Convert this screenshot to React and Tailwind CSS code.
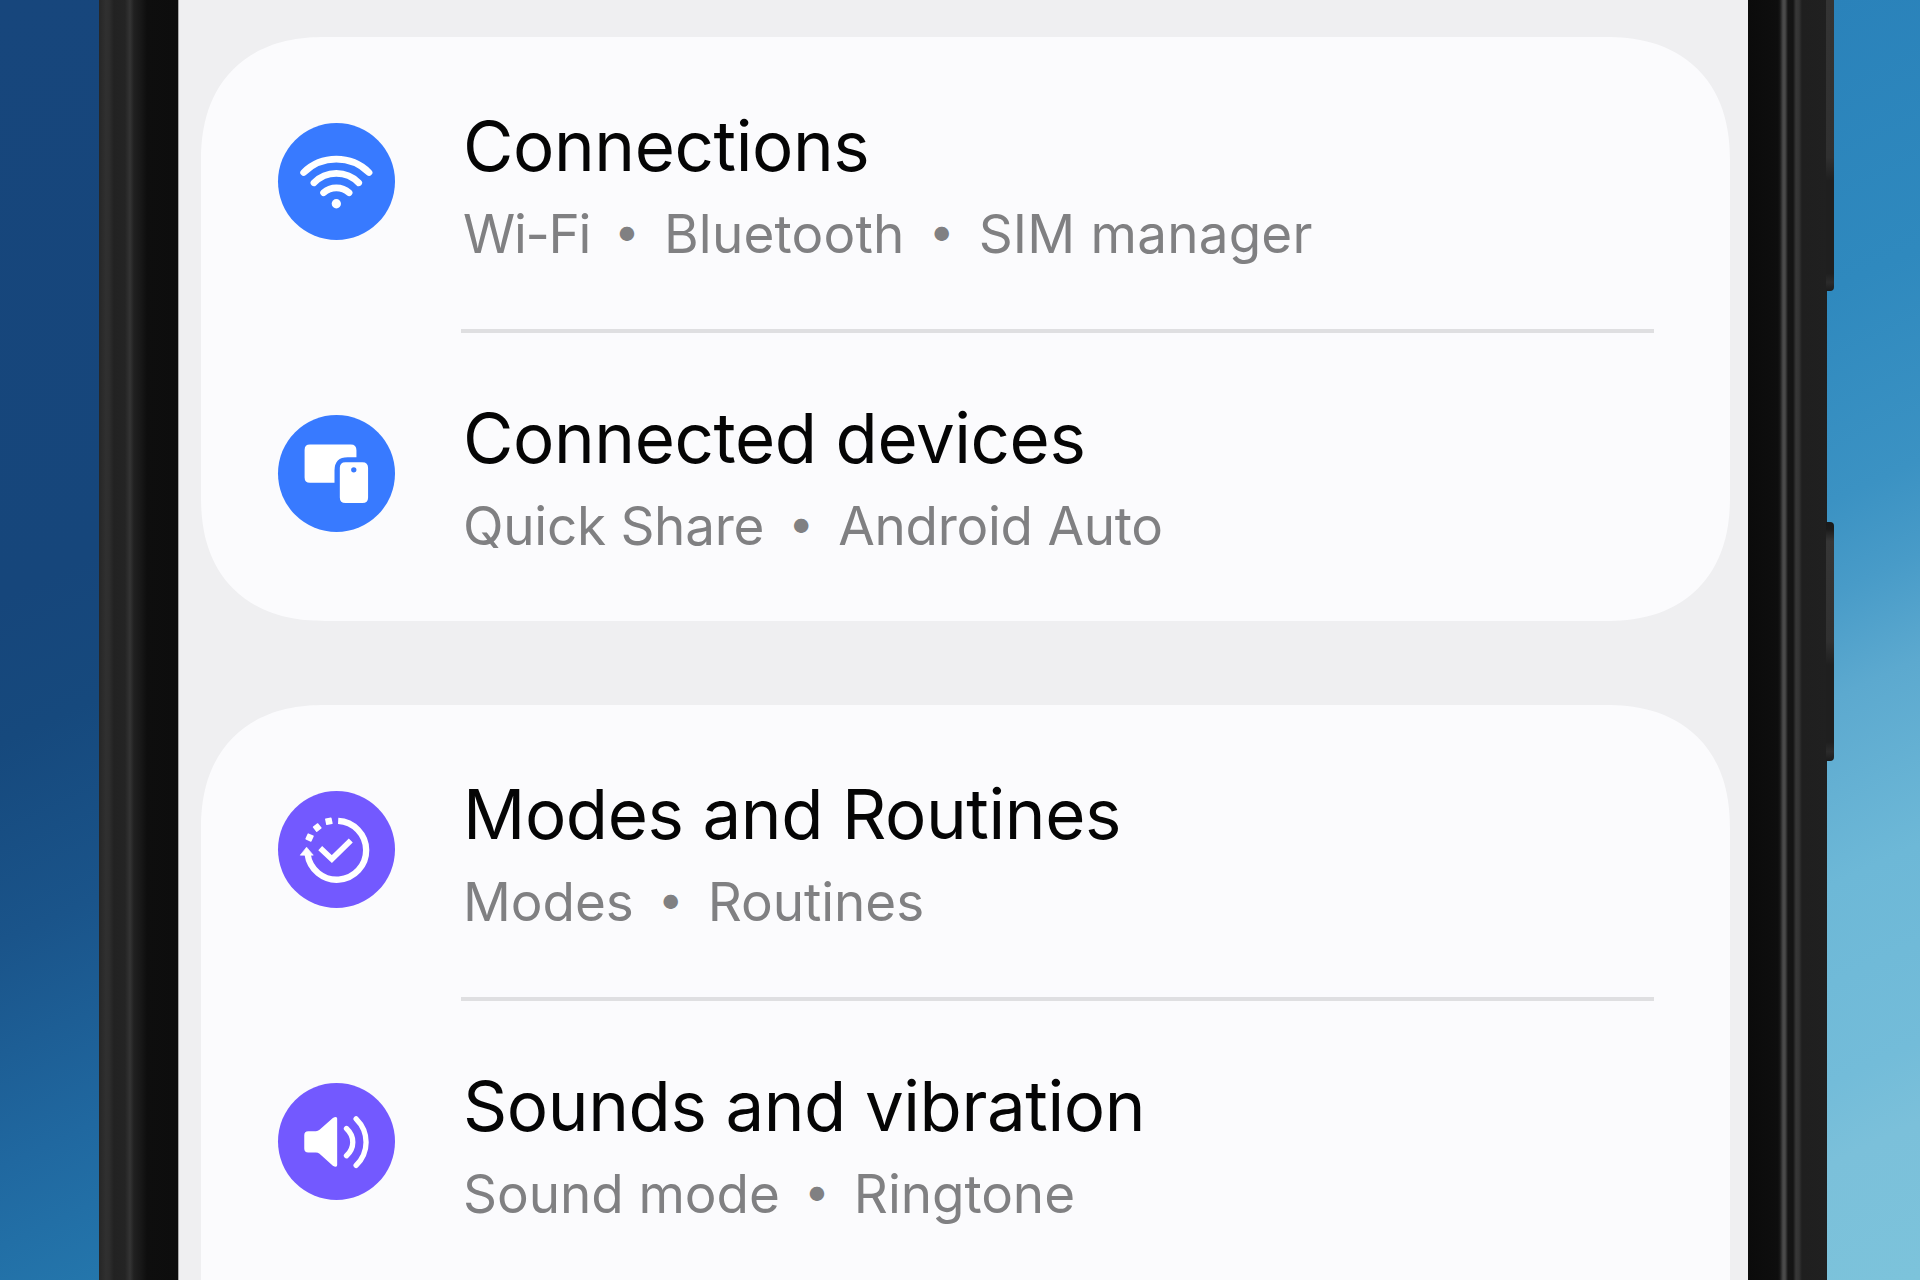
import { Fragment } from 'react';

const WifiIcon = () => (
  <svg viewBox="54 69 352 352" className="w-full h-full" fill="none" stroke="white" strokeWidth="20" strokeLinecap="round">
    <path d="M131 218A141 141 0 0 1 328 218" />
    <path d="M162 249A94 94 0 0 1 297 249" />
    <path d="M191 279A57 57 0 0 1 268 279" />
    <circle cx="229.500" cy="312" r="14" fill="white" stroke="none" />
  </svg>
);

const DevicesIcon = () => (
  <svg viewBox="54 61 352 352" className="w-full h-full" fill="white">
    <path d="M150 150H273Q290 150 290 167V188H264Q224 188 224 228V265H150Q134 265 134 249V166Q134 150 150 150Z" />
    <path
      fillRule="evenodd"
      d="M257 203H308Q325 203 325 220V309Q325 326 308 326H257Q240 326 240 309V220Q240 203 257 203ZM282 218a8 8 0 1 0 0 16a8 8 0 1 0 0 -16Z"
    />
  </svg>
);

const ModesIcon = () => (
  <svg viewBox="54 64 352 352" className="w-full h-full" fill="none" stroke="white" strokeWidth="19">
    <path d="M235 154A88.500 88.500 0 1 1 143 254" />
    <path d="M181 236L216 269L273 213" strokeWidth="17" />
    <path d="M140 233L160 257H121Z" fill="white" stroke="white" strokeWidth="2" />
    <g fill="white" stroke="none">
      <rect x="197" y="145" width="20" height="20" rx="2" transform="rotate(-12 207 155)" />
      <rect x="162" y="164" width="20" height="20" rx="2" transform="rotate(-38 172 174)" />
      <rect x="139" y="194" width="20" height="20" rx="2" transform="rotate(-66 149 204)" />
    </g>
  </svg>
);

const SoundIcon = () => (
  <svg viewBox="54 71 352 352" className="w-full h-full" fill="none" stroke="white" strokeWidth="16" strokeLinecap="round">
    <path
      d="M145 216H168Q174 216 179 212L219 176Q224 173 228 173Q232 173 232 178V318Q232 323 228 323Q224 323 219 320L179 284Q174 280 168 280H145Q133 280 133 268V228Q133 216 145 216Z"
      fill="white"
      stroke="none"
    />
    <path d="M260 208Q279 226 279 249Q279 272 260 290" />
    <path d="M289 179Q319 209 319 249Q319 289 289 319" />
  </svg>
);

const groups = [
  [
    { title: 'Connections', items: ['Wi-Fi', 'Bluetooth', 'SIM manager'], icon: WifiIcon, color: 'bg-[#387aff]', tracking: 'tracking-[0.004em]' },
    { title: 'Connected devices', items: ['Quick Share', 'Android Auto'], icon: DevicesIcon, color: 'bg-[#387aff]', tracking: 'tracking-[-0.005em]' },
  ],
  [
    { title: 'Modes and Routines', items: ['Modes', 'Routines'], icon: ModesIcon, color: 'bg-[#7359ff]', tracking: 'tracking-[-0.001em]' },
    { title: 'Sounds and vibration', items: ['Sound mode', 'Ringtone'], icon: SoundIcon, color: 'bg-[#7359ff]', tracking: 'tracking-[-0.001em]' },
  ],
];

function SettingRow({ title, items, icon: Icon, color, tracking, first }) {
  return (
    <div className="flex h-[292px] pl-[77px]">
      <div className={`mt-[86px] size-[117px] shrink-0 rounded-full ${color}`}>
        <Icon />
      </div>
      <div className={`ml-[66px] mr-[76px] flex-1 ${first ? '' : 'border-t-4 border-[#dfdfe1]'}`}>
        <div className={`pl-[2px] ${first ? 'pt-[69px]' : 'pt-[65px]'}`}>
          <h2 className="whitespace-nowrap text-[69px] leading-[80px] tracking-[-0.006em] text-[#050505]">{title}</h2>
          <p className="mt-4 flex whitespace-nowrap text-[53px] leading-[64px] text-[#808082]">
            {items.map((item, i) => (
              <Fragment key={item}>
                {i > 0 && <span className="w-[74px] text-center text-[46px] leading-[57px]">•</span>}
                <span className={item === 'Wi-Fi' ? 'tracking-[-0.025em]' : tracking}>{item}</span>
              </Fragment>
            ))}
          </p>
        </div>
      </div>
    </div>
  );
}

function SettingCard({ rows }) {
  return (
    <section className="shrink-0 rounded-[124px] bg-[#fbfbfd] [corner-shape:superellipse(1.2)] last:rounded-b-none last:pb-10">
      {rows.map((row, i) => (
        <SettingRow key={row.title} {...row} first={i === 0} />
      ))}
    </section>
  );
}

export default function App() {
  return (
    <div className="flex h-[1280px] w-[1920px] overflow-hidden font-['Inter',sans-serif]">
      {/* Wallpaper and left edge of the phone */}
      <div className="w-[99px] bg-[linear-gradient(155deg,#17467c_0%,#16467b_45%,#16497d_56%,#1a548a_71%,#2068a0_88%,#2476ac_100%)]" />
      <div className="w-[79px] bg-[linear-gradient(90deg,#262626_0px,#303030_7px,#2e2e2e_10px,#222_15px,#242424_26px,#343434_31px,#202020_35px,#191919_41px,#0e0e0e_48px,#0d0d0d_100%)]" />

      {/* Screen */}
      <main className="flex w-[1570px] flex-col gap-[84px] border-l border-[#aaaaaa] bg-[#efeff1] pl-[22px] pr-[18px] pt-[37px]">
        {groups.map((rows) => (
          <SettingCard key={rows[0].title} rows={rows} />
        ))}
      </main>

      {/* Right edge with the side buttons */}
      <div className="relative z-10 w-[79px] bg-[linear-gradient(90deg,#0b0b0b_0px,#0e0e0e_30px,#181818_32px,#4a4a4a_35px,#4a4a4a_37px,#151515_40px,#141414_45px,#383838_48px,#343434_51px,#1f1f1f_54px,#202020_100%)]">
        <div className="absolute left-[78px] top-0 h-[291px] w-[8px] rounded-br-[4px] bg-[linear-gradient(180deg,#343434_0%,#303030_54%,#1f1f1f_62%,#1f1f1f_94%,#2b2b2b_97%,#1c1c1c_100%)]" />
        <div className="absolute left-[78px] top-[522px] h-[239px] w-[8px] rounded-r-[4px] bg-[linear-gradient(180deg,#1a1a1a_0%,#1c1c1c_3%,#363636_8%,#303030_50%,#1f1f1f_60%,#1f1f1f_92%,#2b2b2b_96%,#1c1c1c_100%)]" />
      </div>
      <div className="flex-1 bg-[linear-gradient(155deg,#2a82ba_0%,#2f89be_22%,#3b92c3_38%,#489bc8_45%,#5ca9cf_53%,#6db8d7_67%,#73bcd9_82%,#7bc0da_88%,#7cc3db_100%)]" />
    </div>
  );
}
